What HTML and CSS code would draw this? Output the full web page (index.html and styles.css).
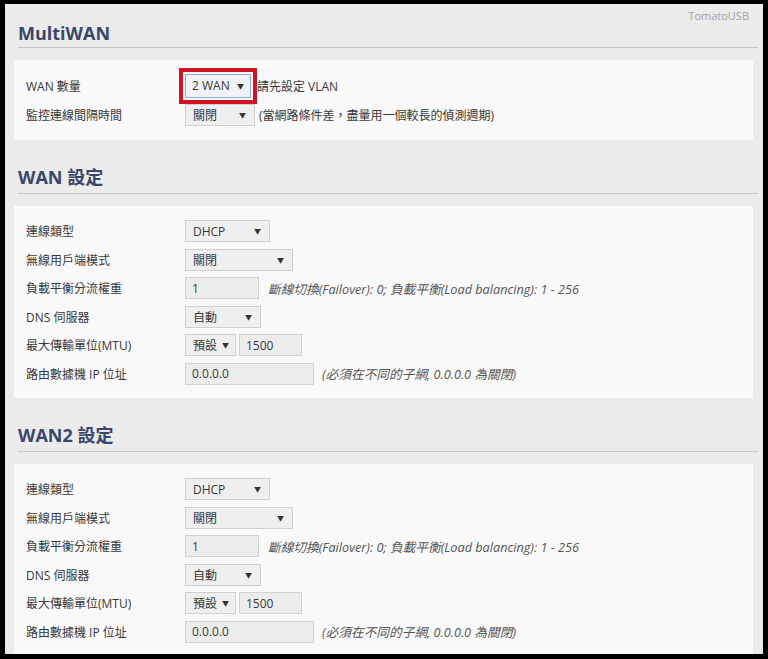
FILE: index.html
```html
<!DOCTYPE html>
<html lang="zh-Hant">
<head>
<meta charset="utf-8">
<title>MultiWAN</title>
<link rel="stylesheet" href="styles.css">
</head>
<body>
<div class="screen">
  <div class="brand">TomatoUSB</div>

  <section class="section section-first">
    <h2 class="title">MultiWAN</h2>
    <div class="panel panel-short">
      <div class="row">
        <div class="label">WAN 數量</div>
        <div class="field">
          <span class="sel sel-focus w-wan">2 WAN<i class="arr">▼</i></span>
          <span class="note note-gap6">請先設定 VLAN</span>
        </div>
      </div>
      <div class="row">
        <div class="label">監控連線間隔時間</div>
        <div class="field">
          <span class="sel w-off">關閉<i class="arr">▼</i></span>
          <span class="note note-gap4">(當網路條件差，盡量用一個較長的偵測週期)</span>
        </div>
      </div>
    </div>
  </section>

  <section class="section">
    <h2 class="title">WAN 設定</h2>
    <div class="panel">
      <div class="row">
        <div class="label">連線類型</div>
        <div class="field"><span class="sel w-dhcp">DHCP<i class="arr">▼</i></span></div>
      </div>
      <div class="row">
        <div class="label">無線用戶端模式</div>
        <div class="field"><span class="sel w-wl">關閉<i class="arr">▼</i></span></div>
      </div>
      <div class="row">
        <div class="label">負載平衡分流權重</div>
        <div class="field">
          <span class="inp w-weight">1</span>
          <span class="hint hint-gap9">斷線切換(Failover): 0; 負載平衡(Load balancing): 1 - 256</span>
        </div>
      </div>
      <div class="row">
        <div class="label">DNS 伺服器</div>
        <div class="field"><span class="sel w-dns">自動<i class="arr">▼</i></span></div>
      </div>
      <div class="row">
        <div class="label">最大傳輸單位(MTU)</div>
        <div class="field">
          <span class="sel sel-tight w-mtu">預設<i class="arr">▼</i></span>
          <span class="inp inp-gap w-mtuval">1500</span>
        </div>
      </div>
      <div class="row">
        <div class="label">路由數據機 IP 位址</div>
        <div class="field">
          <span class="inp w-ip">0.0.0.0</span>
          <span class="hint hint-gap8">(必須在不同的子網, 0.0.0.0 為關閉)</span>
        </div>
      </div>
    </div>
  </section>

  <section class="section">
    <h2 class="title">WAN2 設定</h2>
    <div class="panel">
      <div class="row">
        <div class="label">連線類型</div>
        <div class="field"><span class="sel w-dhcp">DHCP<i class="arr">▼</i></span></div>
      </div>
      <div class="row">
        <div class="label">無線用戶端模式</div>
        <div class="field"><span class="sel w-wl">關閉<i class="arr">▼</i></span></div>
      </div>
      <div class="row">
        <div class="label">負載平衡分流權重</div>
        <div class="field">
          <span class="inp w-weight">1</span>
          <span class="hint hint-gap9">斷線切換(Failover): 0; 負載平衡(Load balancing): 1 - 256</span>
        </div>
      </div>
      <div class="row">
        <div class="label">DNS 伺服器</div>
        <div class="field"><span class="sel w-dns">自動<i class="arr">▼</i></span></div>
      </div>
      <div class="row">
        <div class="label">最大傳輸單位(MTU)</div>
        <div class="field">
          <span class="sel sel-tight w-mtu">預設<i class="arr">▼</i></span>
          <span class="inp inp-gap w-mtuval">1500</span>
        </div>
      </div>
      <div class="row">
        <div class="label">路由數據機 IP 位址</div>
        <div class="field">
          <span class="inp w-ip">0.0.0.0</span>
          <span class="hint hint-gap8">(必須在不同的子網, 0.0.0.0 為關閉)</span>
        </div>
      </div>
    </div>
  </section>
</div>
</body>
</html>
```

FILE: styles.css
```css
html, body {
  margin: 0;
  padding: 0;
  background: #000;
}

body {
  font-family: "Open Sans", "Noto Sans CJK TC", sans-serif;
  font-size: 12px;
  color: #383838;
}

.screen {
  margin: 4px 5px 0 5px;
  height: 650px;
  background: #ebebeb;
  overflow: hidden;
  box-sizing: border-box;
  padding: 0 10px 0 9px;
}

.brand {
  padding-top: 6px;
  line-height: 12px;
  font-size: 11px;
  color: #a3a3a3;
  text-align: right;
  padding-right: 4px;
}

.section {
  margin-top: 26px;
}

.section-first {
  margin-top: 0;
}

.title {
  margin: 0 -5px 0 4px;
  font-family: "Open Sans", "Noto Sans CJK TC", sans-serif;
  font-weight: 700;
  font-size: 18px;
  line-height: 22px;
  color: #3a4769;
  padding-bottom: 5px;
  border-bottom: 1px solid #c6c6c6;
}

.section-first .title {
  padding-bottom: 3px;
}

.panel {
  margin-top: 12px;
  background: #f9f9f9;
  padding: 11px 12px 10px 12px;
}

.panel-short {
  padding-bottom: 11px;
}

.row {
  display: flex;
  align-items: center;
  height: 28.5px;
}

.panel-short .row {
  height: 29px;
}

.label {
  width: 159px;
  flex: none;
  white-space: nowrap;
}

.field {
  display: flex;
  align-items: center;
  white-space: nowrap;
}

.sel {
  display: inline-flex;
  align-items: center;
  justify-content: space-between;
  box-sizing: border-box;
  height: 22px;
  padding: 0 8px 0 7px;
  background: #efefef;
  border: 1px solid #cfcfcf;
  font-size: 12px;
}

.sel-tight {
  padding: 0 6px 0 7px;
}

.sel-focus {
  height: 24px;
  padding: 0 6px 0 6px;
  border-color: #8cb0d9;
  background: #f0f2f5;
  outline: 4px solid #cc1525;
  outline-offset: 2px;
}

.arr {
  font-style: normal;
  font-size: 7px;
  color: #333;
}

.inp {
  display: inline-flex;
  align-items: center;
  box-sizing: border-box;
  height: 22px;
  padding: 0 6px;
  background: #ececec;
  border: 1px solid #d2d2d2;
  font-size: 12px;
}

.inp-gap {
  margin-left: 3px;
}

.note-gap6 {
  margin-left: 6px;
}

.note-gap4 {
  margin-left: 4px;
}

.hint {
  font-style: italic;
  font-size: 12.7px;
  color: #555;
}

.hint-gap9 {
  margin-left: 9px;
}

.hint-gap8 {
  margin-left: 8px;
}

.w-wan { width: 66px; }
.w-off { width: 70px; }
.w-dhcp { width: 85px; }
.w-wl { width: 108px; }
.w-weight { width: 74px; }
.w-dns { width: 76px; }
.w-mtu { width: 51px; }
.w-mtuval { width: 63px; }
.w-ip { width: 129px; }
```
